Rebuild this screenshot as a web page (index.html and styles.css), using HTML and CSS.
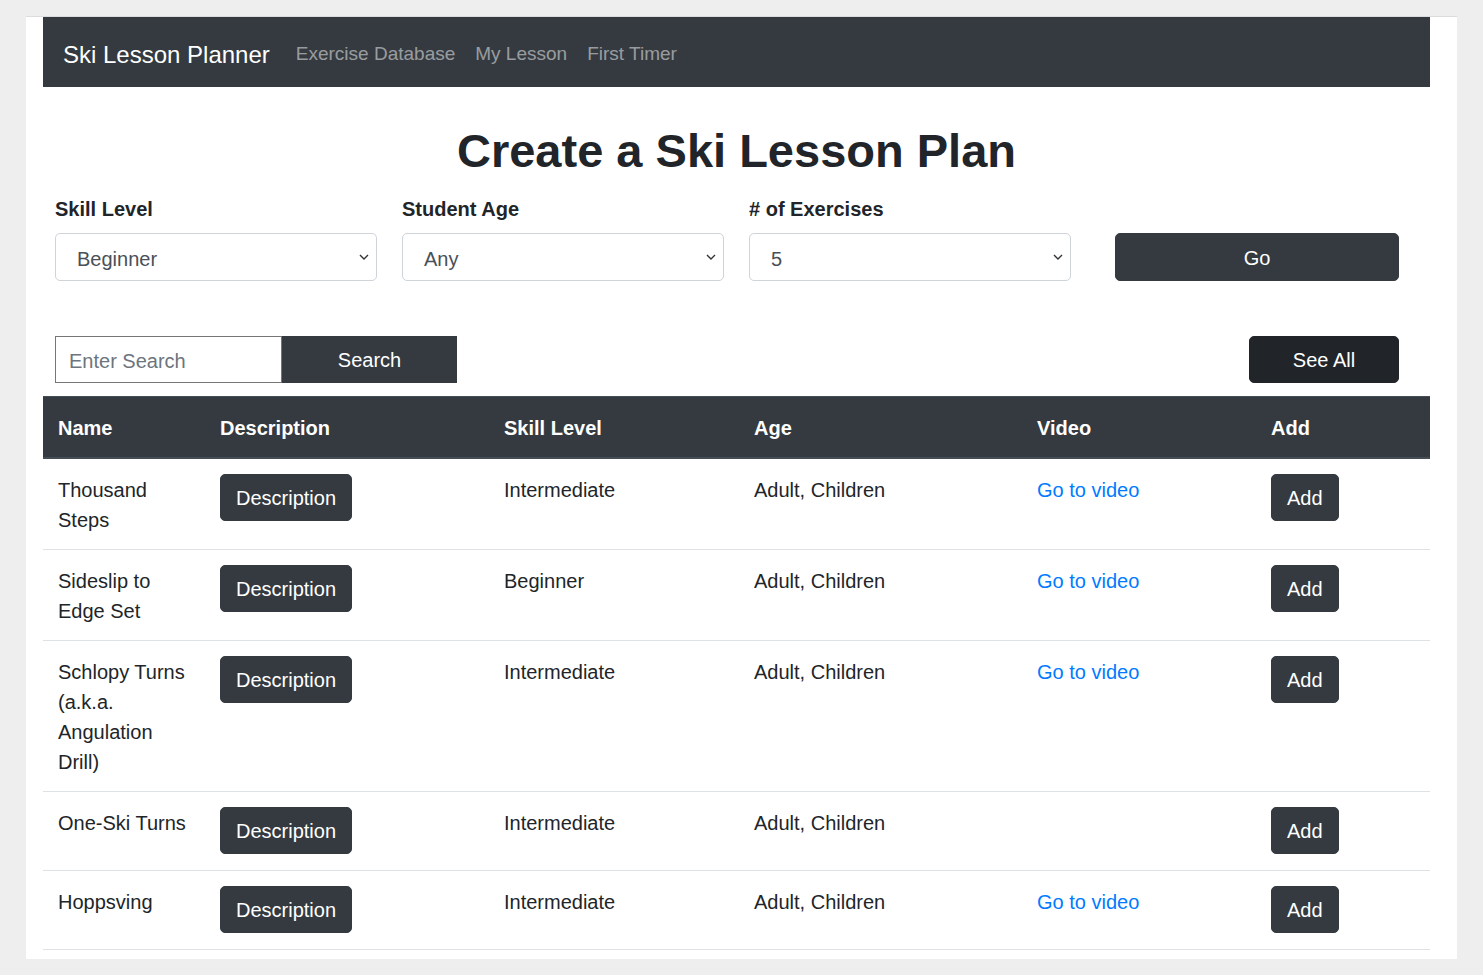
FILE: index.html
```html
<!DOCTYPE html>
<html lang="en">
<head>
<meta charset="utf-8">
<title>Ski Lesson Planner</title>
<link rel="stylesheet" href="styles.css">
</head>
<body>
<div class="page">
  <nav class="navbar">
    <a class="brand" href="#">Ski Lesson Planner</a>
    <ul class="nav">
      <li><a href="#">Exercise Database</a></li>
      <li><a href="#">My Lesson</a></li>
      <li><a href="#">First Timer</a></li>
    </ul>
  </nav>

  <h1 class="title">Create a Ski Lesson Plan</h1>

  <form class="plan-form">
    <div class="field">
      <label class="field-label">Skill Level</label>
      <div class="select-wrap">
        <select class="select"><option>Beginner</option><option>Intermediate</option><option>Advanced</option></select>
        <svg class="chev" width="10" height="6" viewBox="0 0 10 6"><polyline points="1,1 5,5 9,1" fill="none" stroke="#333" stroke-width="1.4"/></svg>
      </div>
    </div>
    <div class="field">
      <label class="field-label">Student Age</label>
      <div class="select-wrap">
        <select class="select"><option>Any</option><option>Adult</option><option>Children</option></select>
        <svg class="chev" width="10" height="6" viewBox="0 0 10 6"><polyline points="1,1 5,5 9,1" fill="none" stroke="#333" stroke-width="1.4"/></svg>
      </div>
    </div>
    <div class="field">
      <label class="field-label"># of Exercises</label>
      <div class="select-wrap">
        <select class="select"><option>5</option><option>10</option><option>15</option></select>
        <svg class="chev" width="10" height="6" viewBox="0 0 10 6"><polyline points="1,1 5,5 9,1" fill="none" stroke="#333" stroke-width="1.4"/></svg>
      </div>
    </div>
    <div class="field field-go">
      <button type="button" class="btn btn-go">Go</button>
    </div>
  </form>

  <div class="search-row">
    <div class="search">
      <input class="search-input" type="text" placeholder="Enter Search">
      <button type="button" class="search-btn">Search</button>
    </div>
    <button type="button" class="btn btn-seeall">See All</button>
  </div>

  <table class="table">
    <colgroup>
      <col class="c-name"><col class="c-desc"><col class="c-skill"><col class="c-age"><col class="c-video"><col class="c-add">
    </colgroup>
    <thead>
      <tr><th>Name</th><th>Description</th><th>Skill Level</th><th>Age</th><th>Video</th><th>Add</th></tr>
    </thead>
    <tbody>
      <tr>
        <td>Thousand Steps</td>
        <td><button type="button" class="btn">Description</button></td>
        <td>Intermediate</td>
        <td>Adult, Children</td>
        <td><a class="link" href="#">Go to video</a></td>
        <td><button type="button" class="btn">Add</button></td>
      </tr>
      <tr>
        <td>Sideslip to Edge Set</td>
        <td><button type="button" class="btn">Description</button></td>
        <td>Beginner</td>
        <td>Adult, Children</td>
        <td><a class="link" href="#">Go to video</a></td>
        <td><button type="button" class="btn">Add</button></td>
      </tr>
      <tr>
        <td>Schlopy Turns (a.k.a. Angulation Drill)</td>
        <td><button type="button" class="btn">Description</button></td>
        <td>Intermediate</td>
        <td>Adult, Children</td>
        <td><a class="link" href="#">Go to video</a></td>
        <td><button type="button" class="btn">Add</button></td>
      </tr>
      <tr>
        <td>One-Ski Turns</td>
        <td><button type="button" class="btn">Description</button></td>
        <td>Intermediate</td>
        <td>Adult, Children</td>
        <td></td>
        <td><button type="button" class="btn">Add</button></td>
      </tr>
      <tr>
        <td>Hoppsving</td>
        <td><button type="button" class="btn">Description</button></td>
        <td>Intermediate</td>
        <td>Adult, Children</td>
        <td><a class="link" href="#">Go to video</a></td>
        <td><button type="button" class="btn">Add</button></td>
      </tr>
    </tbody>
  </table>
</div>
</body>
</html>
```
FILE: styles.css
```css
* { box-sizing: border-box; }

html, body { margin: 0; }

body {
  background: #eeeeee;
  padding: 16px 26px 17px 26px;
  font-family: "Liberation Sans", Arial, sans-serif;
  font-size: 20px;
  line-height: 1.5;
  color: #212529;
}

.page {
  background: #ffffff;
  border-top: 1px solid #dcdcdc;
  padding: 0 27px 9px 17px;
}

/* Navbar */
.navbar {
  height: 70px;
  background: #343a40;
  display: flex;
  align-items: center;
  padding: 5px 20px 0;
}

.brand {
  color: #ffffff;
  font-size: 24px;
  text-decoration: none;
  margin-right: 16px;
}

.nav {
  list-style: none;
  margin: 0;
  padding: 0;
  display: flex;
}

.nav a {
  display: block;
  padding: 0 10px;
  font-size: 19px;
  color: rgba(255, 255, 255, 0.5);
  text-decoration: none;
}

/* Title */
.title {
  margin: 36px 0 14px;
  text-align: center;
  font-size: 47px;
  line-height: 56px;
  font-weight: 700;
  color: #212529;
}

/* Form */
.plan-form {
  display: grid;
  grid-template-columns: repeat(4, 322px);
  column-gap: 25px;
  padding-left: 12px;
}

.field {
  display: flex;
  flex-direction: column;
}

.field-label {
  font-weight: 700;
  line-height: 30px;
  margin-top: 1px;
  margin-bottom: 9px;
}

.select-wrap {
  position: relative;
}

.select {
  display: block;
  width: 100%;
  height: 48px;
  -webkit-appearance: none;
  appearance: none;
  background: #ffffff;
  border: 1px solid #ced4da;
  border-radius: 5px;
  padding: 3px 40px 0 21px;
  font-family: inherit;
  font-size: 20px;
  color: #495057;
}

.chev {
  position: absolute;
  right: 8px;
  top: 21px;
  pointer-events: none;
}

.field-go {
  justify-content: flex-end;
  align-items: center;
}

.btn {
  display: inline-block;
  background: #343a40;
  color: #ffffff;
  border: 1px solid #343a40;
  border-radius: 5px;
  padding: 8px 15px 7px;
  font-family: inherit;
  font-size: 20px;
  line-height: 30px;
  cursor: pointer;
}

.btn-go {
  width: 284px;
  height: 48px;
}

/* Search row */
.search-row {
  margin-top: 55px;
  display: flex;
  justify-content: space-between;
  align-items: center;
  padding: 0 31px 0 12px;
}

.search {
  display: flex;
  height: 47px;
}

.search-input {
  width: 227px;
  height: 47px;
  border: 1px solid #767676;
  border-radius: 0;
  padding: 3px 13px 0;
  font-family: inherit;
  font-size: 20px;
  color: #495057;
}

.search-input::placeholder {
  color: #6c757d;
}

.search-btn {
  width: 175px;
  height: 47px;
  background: #343a40;
  color: #ffffff;
  border: none;
  border-radius: 0;
  padding-top: 3px;
  font-family: inherit;
  font-size: 20px;
}

.btn-seeall {
  width: 150px;
  height: 47px;
  background: #212529;
  border-color: #212529;
}

/* Table */
.table {
  margin-top: 13px;
  width: 100%;
  border-collapse: collapse;
  table-layout: fixed;
  border-bottom: 1px solid #dee2e6;
}

.c-name { width: 162px; }
.c-desc { width: 284px; }
.c-skill { width: 250px; }
.c-age { width: 283px; }
.c-video { width: 234px; }
.c-add { width: 174px; }

.table th {
  background: #343a40;
  color: #ffffff;
  font-weight: 700;
  text-align: left;
  padding: 16px 15px 14px;
  line-height: 30px;
  border-top: 1px solid #454d55;
  border-bottom: 2px solid #454d55;
  vertical-align: bottom;
}

.table td {
  padding: 16px 15px 14px;
  line-height: 30px;
  border-top: 1px solid #dee2e6;
  vertical-align: top;
}

.table td .btn {
  margin-top: -1px;
  margin-bottom: 2px;
}

.link {
  color: #007bff;
  text-decoration: none;
}
```
